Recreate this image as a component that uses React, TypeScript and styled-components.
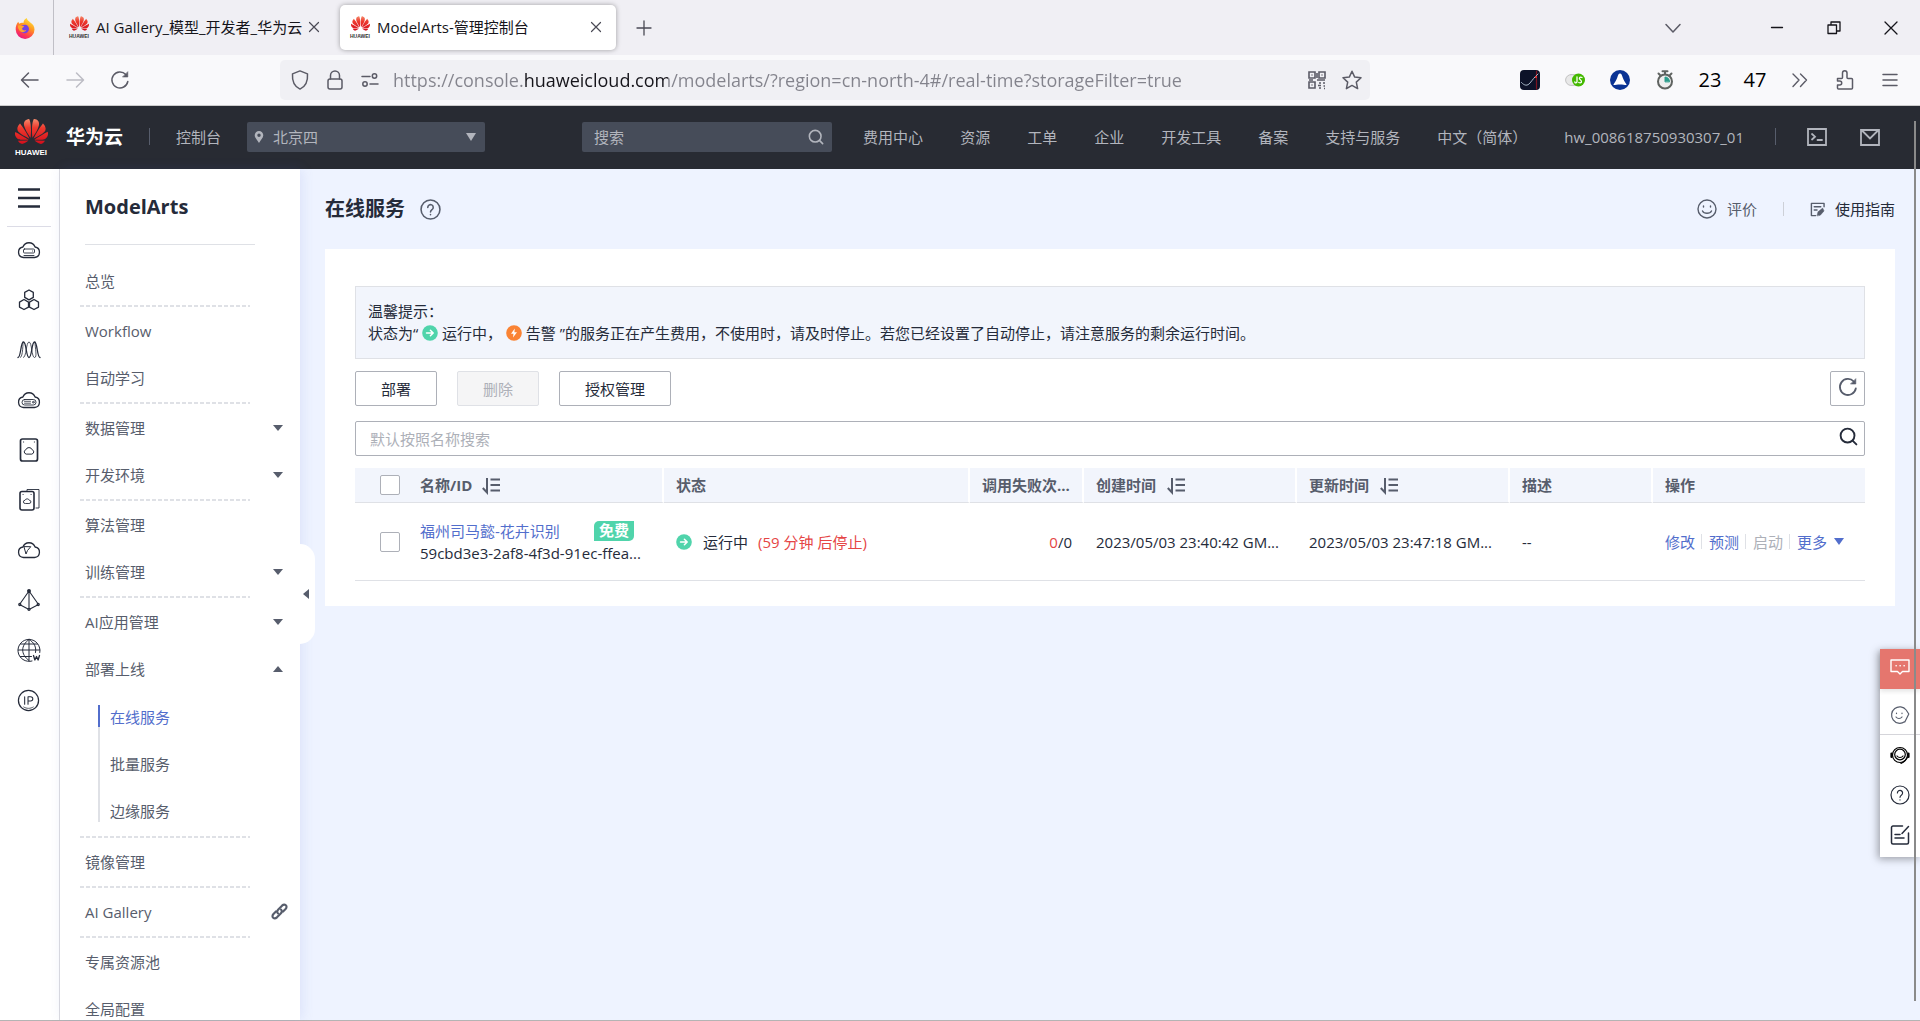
import React from "react";
import styled, { createGlobalStyle, css } from "styled-components";
import { SiHuawei } from "react-icons/si";

const C = {
  ink: "#252b3a",
  text: "#575d6c",
  muted: "#adb0b8",
  line: "#dfe1e6",
  link: "#526ecc",
  red: "#e54545",
  green: "#50d4ab",
  page: "#eef3ff",
  soft: "#f2f5fc",
  dark: "#282b33",
  field: "#464c59",
};

const Global = createGlobalStyle`
  *, *::before, *::after { box-sizing: border-box; }
  html, body, #root { height: 100%; }
  body {
    margin: 0;
    overflow: hidden;
    background: ${C.page};
    color: ${C.ink};
    font: 15px/22px "Open Sans", "Noto Sans CJK SC", sans-serif;
  }
  button, input, select { font: inherit; color: inherit; margin: 0; padding: 0; border: 0; background: none; border-radius: 0; }
  button { display: inline-flex; align-items: center; justify-content: center; white-space: nowrap; }
  a { color: inherit; text-decoration: none; white-space: nowrap; }
  svg { display: block; flex: none; }
  h1, h2, p, ul { margin: 0; padding: 0; }
  ul { list-style: none; }
`;

const Window = styled.div`
  display: flex;
  flex-direction: column;
  height: 100vh;
  border-bottom: 1px solid #b4b4b4;
`;

/* ---------- browser chrome ---------- */

const TabStrip = styled.header`
  display: flex;
  align-items: center;
  height: 55px;
  flex: none;
  background: #f0eff4;
  color: #15141a;
`;
const PinnedTab = styled.button`
  width: 54px;
  height: 55px;
  border-right: 1px solid #c0bfc6;
  padding-right: 4px;
`;
const Tab = styled.div<{ $active?: boolean; $width: number }>`
  display: flex;
  align-items: center;
  width: ${(p) => p.$width}px;
  height: 45px;
  padding: 0 13px 2px 10px;
  border-radius: 5px;
  white-space: nowrap;
  ${(p) => p.$active && css`background: #fff; box-shadow: 0 0 5px rgba(0, 0, 0, 0.35);`}
`;
const TabTitle = styled.span`
  flex: 1;
  padding-left: 7px;
`;
const TabArea = styled.div`
  display: flex;
  padding-left: 5px;
  gap: 6px;
`;
const PlainButton = styled.button<{ $size?: number }>`
  width: ${(p) => p.$size ?? 20}px;
  height: ${(p) => p.$size ?? 20}px;
  flex: none;
`;
const NewTab = styled(PlainButton)`
  margin-left: 18px;
`;
const WindowButtons = styled.div`
  display: flex;
  align-items: center;
  gap: 37px;
  margin-left: auto;
  padding-right: 19px;
`;
const TabList = styled(PlainButton)`
  margin-right: 47px;
`;

const Toolbar = styled.div`
  display: flex;
  align-items: center;
  height: 51px;
  flex: none;
  padding: 0 20px 0 20px;
  border-bottom: 1px solid #cccccc;
  background: #f9f9fb;
  color: #5b5b66;
`;
const ToolGroup = styled.div`
  display: flex;
  align-items: center;
  gap: 25px;
  font-size: 20px;
  color: #5b5b66;
`;
const UrlBar = styled.div`
  display: flex;
  align-items: center;
  flex: 1;
  height: 40px;
  margin: 0 150px 0 150px;
  padding: 0 8px 0 10px;
  gap: 15px;
  border-radius: 5px;
  background: #f0f0f4;
`;
const UrlInput = styled.input`
  flex: 1;
  min-width: 0;
  height: 32px;
  margin-left: -2px;
  outline: none;
  font-size: 18px;
  color: #15141a;
  background-image: linear-gradient(90deg, #83838c 131px, #15141a 131px, #15141a 275px, #83838c 275px);
  background-clip: text;
  -webkit-text-fill-color: transparent;
`;
const Counter = styled.span`
  width: 20px;
  display: flex;
  justify-content: center;
  color: #000;
`;

/* ---------- cloud header ---------- */

const CloudBar = styled.header`
  display: flex;
  align-items: center;
  height: 63px;
  flex: none;
  padding: 0 40px 2px 14px;
  background: ${C.dark};
  color: #b2b5bd;
`;
const LogoBox = styled.span<{ $small?: boolean }>`
  display: flex;
  flex-direction: column;
  align-items: center;
  width: ${(p) => (p.$small ? 20 : 34)}px;
  flex: none;
  color: ${(p) => (p.$small ? "#333" : "#fff")};
  font: bold ${(p) => (p.$small ? "5px/6px" : "8px/10px")} "Liberation Sans", sans-serif;
`;
const Brand = styled.strong`
  margin-left: 18px;
  font-size: 19px;
  color: #fff;
`;
const BarRule = styled.span<{ $gap: number }>`
  width: 1px;
  height: 17px;
  margin: 0 ${(p) => p.$gap}px;
  background: #575d6c;
`;
const RegionBox = styled.label`
  display: flex;
  align-items: center;
  position: relative;
  width: 238px;
  height: 30px;
  margin-left: 26px;
  padding: 0 9px 0 7px;
  gap: 9px;
  border-radius: 2px;
  background: ${C.field};
`;
const RegionSelect = styled.select`
  flex: 1;
  height: 30px;
  appearance: none;
  outline: none;
`;
const BarSearch = styled.label`
  display: flex;
  align-items: center;
  width: 250px;
  height: 30px;
  margin-left: 97px;
  padding: 0 8px 0 12px;
  border-radius: 2px;
  background: ${C.field};
`;
const BarInput = styled.input`
  flex: 1;
  min-width: 0;
  outline: none;
  &::placeholder { color: #b2b5bd; opacity: 1; }
`;
const BarLinks = styled.nav`
  display: flex;
  align-items: center;
  gap: 37px;
  margin-left: auto;
`;
const BarIcons = styled.div`
  display: flex;
  align-items: center;
  gap: 33px;
`;

/* ---------- page body ---------- */

const Body = styled.div`
  display: flex;
  flex: 1;
  min-height: 0;
`;
const Rail = styled.nav`
  display: flex;
  flex-direction: column;
  align-items: center;
  width: 60px;
  flex: none;
  padding: 16px 2px 0 0;
  background: #fff;
  border-right: 1px solid #dcdce0;
`;
const RailRule = styled.hr`
  width: 44px;
  height: 1px;
  margin: 16px 0 0;
  border: 0;
  background: #dcdce6;
`;
const RailLink = styled.a`
  display: flex;
  align-items: center;
  justify-content: center;
  width: 48px;
  height: 50px;
  padding-bottom: 4px;
  color: ${C.ink};
`;
const Side = styled.aside`
  position: relative;
  width: 240px;
  flex: none;
  background: #fff;
  box-shadow: 2px 0 12px rgba(82, 110, 204, 0.12);
`;
const SideTitle = styled.h2`
  height: 76px;
  margin: 0 45px 12px 25px;
  border-bottom: 1px solid #dfe1e6;
  font-size: 20px;
  line-height: 75px;
`;
const SideScroll = styled.div`
  height: 100%;
  overflow: hidden;
`;
const Group = styled.ul`
  padding-bottom: 3px;
  background: repeating-linear-gradient(90deg, ${C.line} 0 4px, transparent 4px 6px) 20px 100% / 170px 2px no-repeat;
`;
const sideRow = css`
  display: flex;
  align-items: center;
  justify-content: space-between;
  width: 100%;
  height: 47px;
  padding: 0 12px 0 25px;
  color: ${C.text};
`;
const SideLink = styled.a`${sideRow}`;
const SideButton = styled.button`${sideRow} padding-right: 17px;`;
const SubItem = styled.li`
  height: 47px;
  padding-left: 38px;
  &:last-child { height: 23px; }
`;
const SubLink = styled.a<{ $active?: boolean }>`
  display: flex;
  align-items: flex-start;
  height: 100%;
  padding-left: 10px;
  line-height: 24px;
  color: ${(p) => (p.$active ? C.link : C.text)};
  border-left: 2px solid ${C.line};
  ${(p) => p.$active && css`border-image: linear-gradient(${C.link} 22px, ${C.line} 22px) 1;`}
`;
const SubList = styled.ul`
  padding: 13px 0;
`;
const Collapse = styled.button`
  position: absolute;
  left: 100%;
  top: 375px;
  width: 15px;
  height: 100px;
  padding-right: 3px;
  border-radius: 0 15px 15px 0;
  background: #fff;
`;
const Main = styled.main`
  flex: 1;
  min-width: 0;
  padding: 0 25px;
`;
const PageHead = styled.div`
  display: flex;
  align-items: center;
  height: 80px;
  color: ${C.text};
`;
const Title = styled.h1`
  margin-right: 15px;
  font-size: 20px;
  line-height: 30px;
  color: ${C.ink};
`;
const HeadLinks = styled.div`
  display: flex;
  align-items: center;
  margin-left: auto;
`;
const HeadLink = styled.a<{ $strong?: boolean }>`
  display: flex;
  align-items: center;
  gap: 10px;
  color: ${(p) => (p.$strong ? C.ink : C.text)};
`;
const HeadRule = styled.span`
  width: 1px;
  height: 14px;
  margin: 0 26px;
  background: #cdd0d8;
`;
const Panel = styled.section`
  padding: 37px 30px 25px;
  background: #fff;
`;
const Notice = styled.div`
  padding: 13px 12px 14px;
  border: 1px solid ${C.line};
  background: ${C.soft};
`;
const NoticeLine = styled.p`
  display: flex;
  align-items: center;
  white-space: pre;
`;
const Actions = styled.div`
  display: flex;
  gap: 20px;
  margin: 12px 0 15px;
`;
const ActionButton = styled.button`
  height: 35px;
  padding: 0 25px;
  border: 1px solid ${C.muted};
  border-radius: 2px;
  background: #fff;
  &:disabled { background: #f5f5f6; border-color: ${C.line}; color: ${C.muted}; }
`;
const RefreshButton = styled(ActionButton)`
  width: 35px;
  padding: 0 0 3px;
  margin-left: auto;
  color: ${C.text};
`;
const SearchBox = styled.label`
  display: flex;
  align-items: center;
  height: 35px;
  padding: 0 6px 0 14px;
  border: 1px solid ${C.muted};
  border-radius: 2px;
  svg { margin-bottom: 4px; }
`;
const SearchInput = styled.input`
  flex: 1;
  outline: none;
  &::placeholder { color: ${C.muted}; opacity: 1; }
`;
const Table = styled.table`
  width: 100%;
  margin-top: 12px;
  border-collapse: separate;
  border-spacing: 0;
  table-layout: fixed;
`;
const Col = styled.col<{ $w?: string }>`
  width: ${(p) => p.$w ?? "auto"};
`;
const Th = styled.th`
  height: 35px;
  padding: 0 0 0 12px;
  border-bottom: 1px solid ${C.line};
  border-right: 2px solid #fff;
  background: ${C.soft};
  color: ${C.text};
  text-align: left;
  white-space: nowrap;
  overflow: hidden;
  &:first-child { padding-left: 25px; }
  &:last-child { border-right: 0; }
`;
const Td = styled.td<{ $right?: boolean }>`
  height: 78px;
  padding: 0 12px;
  border-bottom: 1px solid ${C.line};
  text-align: ${(p) => (p.$right ? "right" : "left")};
  white-space: nowrap;
  &:first-child { padding-left: 25px; }
`;
const Flex = styled.div<{ $gap: number }>`
  display: flex;
  align-items: center;
  gap: ${(p) => p.$gap}px;
`;
const Check = styled.input`
  appearance: none;
  width: 20px;
  height: 20px;
  flex: none;
  border: 1px solid ${C.muted};
  border-radius: 2px;
  background: #fff;
`;
const NameLine = styled.div`
  display: flex;
  align-items: center;
  justify-content: space-between;
  width: 214px;
`;
const Blue = styled.a`color: ${C.link};`;
const Red = styled.span`color: ${C.red};`;
const Free = styled.span`
  height: 20px;
  padding: 0 5px;
  border-radius: 5px 0 5px 0;
  background: ${C.green};
  color: #fff;
  font-weight: bold;
  line-height: 18px;
`;
const Ops = styled.div`
  display: flex;
  align-items: center;
  & > * + * { margin-left: 6px; padding-left: 7px; }
`;
const Op = styled.button`
  gap: 7px;
  height: 15px;
  color: ${C.link};
  & + & { border-left: 1px solid ${C.line}; }
  &:disabled { color: ${C.muted}; }
`;

/* ---------- floating helpers ---------- */

const Float = styled.div`
  position: fixed;
  right: 0;
  top: 649px;
  width: 40px;
  padding-bottom: 2px;
  background: #fff;
  box-shadow: -2px 2px 8px rgba(0, 0, 0, 0.35);
`;
const FloatButton = styled.button<{ $hot?: boolean; $rule?: boolean }>`
  width: 40px;
  height: 40px;
  color: ${(p) => (p.$hot ? "#fff" : C.ink)};
  background: ${(p) => (p.$hot ? "#e5766e" : "#fff")};
  ${(p) => p.$hot && css`margin-bottom: 6px; padding-bottom: 4px; box-shadow: 0 2px 5px rgba(0, 0, 0, 0.12);`}
  ${(p) => p.$rule && css`border-bottom: 1px solid #d5d5da;`}
`;
const ScrollThumb = styled.div`
  position: fixed;
  right: 4px;
  top: 121px;
  bottom: 20px;
  width: 2px;
  background: #8a8a8a;
`;

/* ---------- drawings ---------- */

type IconProps = { size?: number; w?: number; children: React.ReactNode; box?: number; color?: string };
const Icon = ({ size = 20, w = 1.4, box = 20, color = "currentColor", children }: IconProps) => (
  <svg width={size} height={size} viewBox={`0 0 ${box} ${box}`} fill="none" stroke={color} strokeWidth={w} strokeLinecap="round" strokeLinejoin="round" aria-hidden="true">
    {children}
  </svg>
);

const Huawei = ({ small }: { small?: boolean }) => (
  <LogoBox $small={small}>
    <svg width="0" height="0" style={{ position: "absolute" }} aria-hidden="true">
      <linearGradient id="petal" x1="0" y1="0" x2="0" y2="1">
        <stop offset="0" stopColor="#f58a6c" />
        <stop offset="0.35" stopColor="#ee3a2e" />
        <stop offset="1" stopColor="#d40e1c" />
      </linearGradient>
    </svg>
    <SiHuawei size={small ? 19 : 33} fill="url(#petal)" viewBox="0 2 24 20" height={small ? 16 : 27} />
    HUAWEI
  </LogoBox>
);

const Firefox = () => (
  <svg width="22" height="22" viewBox="0 0 22 22" aria-hidden="true">
    <defs>
      <linearGradient id="fox" x1="0.8" y1="0" x2="0.3" y2="1">
        <stop offset="0" stopColor="#fff044" />
        <stop offset="0.4" stopColor="#ff9a1f" />
        <stop offset="0.75" stopColor="#ff3d4f" />
        <stop offset="1" stopColor="#e31587" />
      </linearGradient>
    </defs>
    <path d="M12.6 1c.4 2 2.2 3 3.4 4.2C18.800 7 20.500 9.300 20.500 12.400A9.400 9.400 0 0 1 1.700 12.600C1.500 9.500 2.600 6.500 4.300 4.800c.2.900.5 1.400 1 1.900C7 5.500 8.500 5.800 9.400 6c.2-2.200 1.300-4 3.200-5z" fill="url(#fox)" />
    <path d="M7.200 9.500c1-1.700 4.600-2.600 6.500-.6 2.100 2.100 1.500 5.900-1.500 7-2.900 1-5.800-.7-5.800-3.500 0-1.200.3-2.100.8-2.900z" fill="#7542e5" />
    <path d="M4 8.700c1.300-.6 2.700-.5 3.500.2l2.600.2c-.2 1.300-1.300 1.400-2 2.100-.2 1.800 1.800 2.700 4.100 1.900-.8 2.300-3.900 2.700-5.700 1.400C4.600 13 3.700 10.800 4 8.700z" fill="#ffa42a" />
  </svg>
);

const Close = () => (
  <Icon size={14} box={14} w={1.2} color="#4a4a55"><path d="M2.500 2.500l9 9M11.500 2.500l-9 9" /></Icon>
);
const Reload = ({ size = 20, w = 1.6 }: { size?: number; w?: number }) => (
  <Icon size={size} w={w}>
    <path d="M17.800 11.500A8 8 0 1 1 15.800 4.500" />
    <path d="M17.800 2v5h-5z" fill="currentColor" strokeWidth="0.6" />
  </Icon>
);
const Magnifier = ({ size = 18, w = 1.8 }: { size?: number; w?: number }) => (
  <Icon size={size} w={w}><circle cx="9" cy="9" r="7.300" /><path d="M14.300 14.300l4 4" /></Icon>
);
const Triangle = ({ dir = "down", color = C.text, w = 10, h = 6 }: { dir?: "down" | "up" | "left"; color?: string; w?: number; h?: number }) => {
  const d = { down: "M0 0h10L5 6z", up: "M0 6h10L5 0z", left: "M10 0v6L0 3z" }[dir];
  return <svg width={w} height={h} viewBox="0 0 10 6" preserveAspectRatio="none" aria-hidden="true"><path d={d} fill={color} /></svg>;
};
const Sort = () => (
  <Icon size={20} w={2}>
    <path d="M6 3v14.500l-4.200-4.500" strokeLinecap="butt" strokeLinejoin="miter" />
    <path d="M9.500 4.500H19M9.500 10H19M9.500 15.500H19" strokeLinecap="butt" />
  </Icon>
);
const Running = () => (
  <Icon size={16} box={16} w={1.5} color="#fff">
    <circle cx="8" cy="8" r="7.800" fill={C.green} stroke="none" />
    <path d="M4.500 8h6.600M8.400 5.200L11.200 8l-2.800 2.800" />
  </Icon>
);
const Alarm = () => (
  <Icon size={16} box={16} color="#fff">
    <circle cx="8" cy="8" r="7.800" fill="#fa8334" stroke="none" />
    <path d="M8.800 3.500L5 8.800h2.500L7 12.500l4-5.300H8.400z" fill="#fff" stroke="none" />
  </Icon>
);
const Question = ({ size = 20, w = 1.5 }: { size?: number; w?: number }) => (
  <Icon size={size} w={w}>
    <circle cx="10" cy="10" r="9" />
    <path d="M7.400 8a2.600 2.600 0 1 1 4.200 2c-1 .8-1.600 1.200-1.600 2.300M10 14.800v.2" />
  </Icon>
);

const cloud = "M6.500 19.500a5.300 5.300 0 0 1-.6-10.500 6.500 6.500 0 0 1 12.200 0 5.300 5.300 0 0 1-.6 10.500z";
const railIcons: [string, React.ReactNode][] = [
  ["弹性云服务器", <><path d={cloud} /><rect x="6.500" y="11" width="11" height="4" rx="1" strokeWidth="0.9" /><path d="M7 17.500h10M15.500 13h.2" strokeWidth="0.9" /></>],
  ["容器", <><path d="M12 2l4.300 2.400v5L12 11.900 7.700 9.400v-5zM7 11.500l4.500 2.600v5L7 21.500l-4.500-2.400v-5zM17 11.500l4.500 2.600v5L17 21.500l-4.500-2.400v-5z" /></>],
  ["弹性伸缩", <><path d="M1 19.500C4 19.500 3.500 4 6.500 4S9 19.500 12 19.500 14.500 4 17.500 4 20 19.500 23 19.500" /><path d="M3.500 19.500C6 19.500 6 4 6 4M6.500 19.500C9.500 19.500 9 4 12 4s2.500 15.500 5.500 15.500S18 10 18 4" strokeWidth="0.8" /></>],
  ["裸金属服务器", <><path d={cloud} /><rect x="5" y="11.500" width="14" height="5.500" rx="2.700" strokeWidth="0.9" /><path d="M7.500 13.300h6M7.500 15.200h6" strokeWidth="0.8" /><circle cx="16.300" cy="14.200" r="0.900" strokeWidth="0.8" /></>],
  ["云硬盘", <><rect x="3.500" y="1" width="17" height="22" rx="2" strokeWidth="1.700" /><path d="M8.800 16a2.200 2.200 0 0 1 0-4.200 3.400 3.400 0 0 1 6.400 0 2.200 2.200 0 0 1 0 4.200zM6.500 4h.2M17.300 4h.2" strokeWidth="1" /></>],
  ["云备份", <><rect x="3" y="3.500" width="14" height="18.500" rx="2" strokeWidth="1.600" /><path d="M8 15.500a1.600 1.600 0 0 1 0-3.200 2.300 2.300 0 0 1 4.300 0 1.600 1.600 0 0 1 0 3.200zM6 6.500h.2M14 6.500h.2M10 3V1.500h12v18.500h-3" strokeWidth="0.900" /></>],
  ["云监控", <><path d={cloud} /><path d="M7 9l2 7 1.500-3.500L13.500 9z" strokeWidth="1" /></>],
  ["网络", <><path d="M12 3L2.500 16.500 12 21.500l9.500-5zM12 3v18.500" strokeWidth="1.100" /><circle cx="12" cy="3" r="1.300" fill="currentColor" /><circle cx="2.800" cy="16.500" r="1" fill="#fff" /><circle cx="21.200" cy="16.500" r="1" fill="#fff" /><circle cx="12" cy="21.300" r="1" fill="#fff" /></>],
  ["域名", <><path d="M15 23A11 11 0 1 1 22.800 14.500M12 1.500v21M1.200 12h21.600M3.500 6h17M3.500 18.500h11M12 1.500c-8.500 6-8.500 15 0 21M12 1.500c5.500 3 7.500 8 6.500 13" strokeWidth="1" /><path d="M16.500 17.500l1.400 4.500 1.600-3.500 1.600 3.500 1.400-4.500" /></>],
];

type NavItem = { label: string; arrow?: "down" | "up"; ext?: boolean; sub?: string[] };
const groups: NavItem[][] = [
  [{ label: "总览" }],
  [{ label: "Workflow" }, { label: "自动学习" }],
  [{ label: "数据管理", arrow: "down" }, { label: "开发环境", arrow: "down" }],
  [{ label: "算法管理" }, { label: "训练管理", arrow: "down" }],
  [{ label: "AI应用管理", arrow: "down" }, { label: "部署上线", arrow: "up", sub: ["在线服务", "批量服务", "边缘服务"] }],
  [{ label: "镜像管理" }],
  [{ label: "AI Gallery", ext: true }],
  [{ label: "专属资源池" }, { label: "全局配置" }],
];

const LinkIcon = () => (
  <Icon size={17} box={18} w={2.3}>
    <path d="M7.300 11c-1.200-1.500-.8-3 .4-4.200l4-4c1.400-1.300 3-1.300 4-.4s1 2.600-.3 4l-2.600 2.600" />
    <path d="M10.700 7c1.200 1.500.8 3-.4 4.200l-4 4c-1.400 1.300-3 1.300-4 .4s-1-2.600.3-4L5.200 9" />
  </Icon>
);

const SideNav = () => (
  <Side>
    <SideScroll>
      <SideTitle>ModelArts</SideTitle>
      {groups.map((items, i) => (
        <Group key={i}>
          {items.map((it) => (
            <li key={it.label}>
              {it.arrow ? (
                <SideButton type="button" aria-expanded={it.arrow === "up"}>{it.label}<Triangle dir={it.arrow} /></SideButton>
              ) : (
                <SideLink href="#">{it.label}{it.ext && <LinkIcon />}</SideLink>
              )}
              {it.sub && (
                <SubList>
                  {it.sub.map((s, k) => (
                    <SubItem key={s}><SubLink href="#" $active={k === 0}>{s}</SubLink></SubItem>
                  ))}
                </SubList>
              )}
            </li>
          ))}
        </Group>
      ))}
    </SideScroll>
    <Collapse type="button" aria-label="收起"><Triangle dir="left" w={6} h={10} /></Collapse>
  </Side>
);

const Browser = () => (
  <>
    <TabStrip>
      <PinnedTab type="button" aria-label="Firefox"><Firefox /></PinnedTab>
      <TabArea>
        <Tab $width={275}>
          <Huawei small />
          <TabTitle>AI Gallery_模型_开发者_华为云</TabTitle>
          <PlainButton type="button" $size={14} aria-label="关闭标签页"><Close /></PlainButton>
        </Tab>
        <Tab $width={276} $active>
          <Huawei small />
          <TabTitle>ModelArts-管理控制台</TabTitle>
          <PlainButton type="button" $size={14} aria-label="关闭标签页"><Close /></PlainButton>
        </Tab>
      </TabArea>
      <NewTab type="button" aria-label="新建标签页"><Icon w={1.3} color="#4a4a55"><path d="M10 3v14M3 10h14" /></Icon></NewTab>
      <WindowButtons>
        <TabList type="button" aria-label="所有标签页"><Icon w={1.5} color="#5b5b66"><path d="M3 6.500l7 7.500 7-7.500" /></Icon></TabList>
        <PlainButton type="button" aria-label="最小化"><Icon w={1.3}><path d="M4.500 9.500h11" /></Icon></PlainButton>
        <PlainButton type="button" aria-label="还原"><Icon w={1.3}><path d="M4 7h8.500v8.500H4zM7 7V4h9v9h-3" /></Icon></PlainButton>
        <PlainButton type="button" aria-label="关闭"><Icon w={1.3}><path d="M4 4l12 12M16 4L4 16" /></Icon></PlainButton>
      </WindowButtons>
    </TabStrip>
    <Toolbar>
      <ToolGroup>
        <PlainButton type="button" aria-label="后退"><Icon w={1.5}><path d="M18 10H2M8.500 3L1.500 10l7 7" /></Icon></PlainButton>
        <PlainButton type="button" aria-label="前进"><Icon w={1.5} color="#bcbcc4"><path d="M2 10h16M11.500 3l7 7-7 7" /></Icon></PlainButton>
        <PlainButton type="button" aria-label="刷新页面"><Reload w={1.5} /></PlainButton>
      </ToolGroup>
      <UrlBar>
        <Icon w={1.5}><path d="M10 .9l7.500 3c.5 7-1.500 12.500-7.500 15.200C4 16.400 2 10.900 2.500 3.900z" /></Icon>
        <Icon w={1.5}><rect x="3" y="9" width="14" height="10" rx="2" /><path d="M5.500 9V5.500a4.500 4.500 0 0 1 9 0V9" /></Icon>
        <Icon w={1.5}><path d="M2 6.500h8M10 14h8" /><circle cx="14.500" cy="6" r="2.200" /><circle cx="5" cy="14" r="2.200" /></Icon>
        <UrlInput type="text" aria-label="网址" defaultValue="https://console.huaweicloud.com/modelarts/?region=cn-north-4#/real-time?storageFilter=true" />
        <PlainButton type="button" aria-label="二维码">
          <Icon w={1.6}>
            <path d="M2 2h6v6H2zM12 2h6v6h-6zM2 12h6v6H2z" strokeLinejoin="miter" />
            <path d="M4.500 5h1M14.500 5h1M4.500 15h1M10 3v5M10 10h8M2 10h4M12 13h2M16 13h2M11 15.500h3M16.500 16h1.500M12 18h2M17 18.500h1" strokeLinecap="butt" />
          </Icon>
        </PlainButton>
        <PlainButton type="button" aria-label="收藏"><Icon w={1.5}><path d="M10 1.200l2.700 5.900 6.300.7-4.700 4.300 1.300 6.500L10 15.400l-5.600 3.200 1.300-6.500L1 7.800l6.300-.7z" /></Icon></PlainButton>
      </UrlBar>
      <ToolGroup>
        <PlainButton type="button" aria-label="扩展一">
          <Icon><rect width="20" height="20" rx="4" fill="#0c1228" stroke="none" /><path d="M16.500 1v18" stroke="#7c1420" strokeWidth="1.200" /><path d="M1.500 12.500c3 3.500 6 3.500 8.500.5s4.500-6 8-9" stroke="#a9b8c8" strokeWidth="1" /><circle cx="16" cy="7" r="1" fill="#f33" stroke="none" /></Icon>
        </PlainButton>
        <PlainButton type="button" aria-label="JavaScript 开关">
          <Icon><rect x=".6" y="4.600" width="17" height="10.800" rx="5.400" fill="#e8e8e8" stroke="#bdbdbd" strokeWidth="0.900" /><circle cx="13.500" cy="10" r="6.500" fill="#44b900" stroke="none" /><path d="M12 7v4.500c0 1.800-2.200 1.800-2.200.3M17 7.500c-2.500-1-3.500 1-1.700 2.200s1.700 4-1.500 2.800" stroke="#fff" strokeWidth="1.300" /></Icon>
        </PlainButton>
        <PlainButton type="button" aria-label="扩展二">
          <Icon><circle cx="10" cy="10" r="10" fill="#0a3394" stroke="none" /><path d="M10 3.500c1.500 0 1.800 1.500 2.700 4s2 4.500 4 7.200c-2 .8-3.500-.2-4.800-.3H8.100c-1.300.1-2.800 1.100-4.800.3 2-2.700 3.100-4.700 4-7.200s1.200-4 2.700-4z" fill="#fff" stroke="none" /></Icon>
        </PlainButton>
        <PlainButton type="button" aria-label="计时器">
          <Icon color="#5f6360" w={2}><circle cx="10" cy="11.500" r="7" fill="#eee" /><path d="M10 11.500V7a4.500 4.500 0 0 1 4.500 4.500z" fill="#2b9c8a" stroke="#2b9c8a" strokeWidth="1" /><path d="M7.500 1.200h5M10 1.500v2.500M3.500 3.500L5 5M16.500 3.500L15 5" /></Icon>
        </PlainButton>
        <Counter>23</Counter>
        <Counter>47</Counter>
        <PlainButton type="button" aria-label="更多工具"><Icon w={1.4}><path d="M3 4l6 6-6 6.500M10.500 4l6 6-6 6.500" /></Icon></PlainButton>
        <PlainButton type="button" aria-label="扩展"><Icon w={1.500}><path d="M2.500 8.500h4a1 1 0 0 0 1-1V3a2.200 2.200 0 0 1 4.500 0v4.500a1 1 0 0 0 1 1h3.500a1 1 0 0 1 1 1V18a1 1 0 0 1-1 1h-13a1 1 0 0 1-1-1v-3h2.200a2 2 0 0 0 0-4H2.500z" /></Icon></PlainButton>
        <PlainButton type="button" aria-label="菜单"><Icon w={1.500}><path d="M3 4.500h14M3 10h14M3 15.500h14" /></Icon></PlainButton>
      </ToolGroup>
    </Toolbar>
  </>
);

const CloudHeader = () => (
  <CloudBar>
    <Huawei />
    <Brand>华为云</Brand>
    <BarRule $gap={26} />
    <a href="#">控制台</a>
    <RegionBox>
      <svg width="10" height="12" viewBox="0 0 10 14" aria-hidden="true"><path fillRule="evenodd" d="M5 0a5 5 0 0 1 5 5c0 3.300-3.300 5.500-5 9-1.700-3.500-5-5.700-5-9a5 5 0 0 1 5-5zm0 3a2 2 0 1 0 0 4 2 2 0 0 0 0-4z" fill="#b2b5bd" /></svg>
      <RegionSelect aria-label="区域"><option>北京四</option></RegionSelect>
      <Triangle color="#b2b5bd" w={10} h={8} />
    </RegionBox>
    <BarSearch>
      <BarInput type="text" placeholder="搜索" aria-label="搜索" />
      <Magnifier size={16} w={2} />
    </BarSearch>
    <BarLinks>
      {["费用中心", "资源", "工单", "企业", "开发工具", "备案", "支持与服务", "中文（简体）", "hw_008618750930307_01"].map((t) => (
        <a href="#" key={t}>{t}</a>
      ))}
    </BarLinks>
    <BarRule $gap={31} />
    <BarIcons>
      <PlainButton type="button" aria-label="命令行"><Icon w={1.800}><path d="M1 2h18v16H1zM5 7l3 2.700L5 12.500M10.500 13h4.500" strokeLinejoin="miter" /></Icon></PlainButton>
      <PlainButton type="button" aria-label="消息"><Icon w={1.800}><path d="M1 3h18v15H1zM2.500 4l7.500 7.500L17.500 4" strokeLinejoin="miter" /></Icon></PlainButton>
    </BarIcons>
  </CloudBar>
);

const RailNav = () => (
  <Rail>
    <PlainButton type="button" aria-label="服务列表" $size={25}><Icon size={24} box={24} w={2.400}><path d="M1 3.500h22M1 12h22M1 20.500h22" strokeLinecap="butt" /></Icon></PlainButton>
    <RailRule />
    {railIcons.map(([label, art]) => (
      <RailLink href="#" key={label} aria-label={label}><Icon size={24} box={24} w={1.300}>{art}</Icon></RailLink>
    ))}
    <RailLink href="#" aria-label="弹性公网IP">
      <Icon size={23} box={24} w={1.300}><circle cx="12" cy="12" r="10.500" /><path d="M8 8v8M11.500 16V8h2.700a2.300 2.300 0 0 1 0 4.600h-2.700" strokeWidth="1.100" /><path d="M7 18.800c3 1.900 7 1.900 10 0" strokeWidth="0.800" /></Icon>
    </RailLink>
  </Rail>
);

const ServiceTable = () => (
  <Table>
    <colgroup>
      <Col $w="309px" /><Col $w="306px" /><Col $w="114px" /><Col $w="213px" /><Col $w="213px" /><Col $w="143px" /><Col />
    </colgroup>
    <thead>
      <tr>
        <Th scope="col"><Flex $gap={20}><Check type="checkbox" aria-label="全选" /><Flex $gap={9}>名称/ID<Sort /></Flex></Flex></Th>
        <Th scope="col">状态</Th>
        <Th scope="col">调用失败次...</Th>
        <Th scope="col"><Flex $gap={10}>创建时间<Sort /></Flex></Th>
        <Th scope="col"><Flex $gap={10}>更新时间<Sort /></Flex></Th>
        <Th scope="col">描述</Th>
        <Th scope="col">操作</Th>
      </tr>
    </thead>
    <tbody>
      <tr>
        <Td>
          <Flex $gap={20}>
            <Check type="checkbox" aria-label="选择 福州司马懿-花卉识别" />
            <div>
              <NameLine><Blue href="#">福州司马懿-花卉识别</Blue><Free>免费</Free></NameLine>
              59cbd3e3-2af8-4f3d-91ec-ffea...
            </div>
          </Flex>
        </Td>
        <Td><Flex $gap={11}><Running /><Flex $gap={10}>运行中<Red>(59 分钟 后停止)</Red></Flex></Flex></Td>
        <Td $right><Red>0</Red>/0</Td>
        <Td>2023/05/03 23:40:42 GM...</Td>
        <Td>2023/05/03 23:47:18 GM...</Td>
        <Td>--</Td>
        <Td>
          <Ops>
            <Op type="button">修改</Op>
            <Op type="button">预测</Op>
            <Op type="button" disabled>启动</Op>
            <Op type="button">更多<Triangle color={C.link} w={10} h={7} /></Op>
          </Ops>
        </Td>
      </tr>
    </tbody>
  </Table>
);

export default function App() {
  return (
    <Window>
      <Global />
      <Browser />
      <CloudHeader />
      <Body>
        <RailNav />
        <SideNav />
        <Main>
          <PageHead>
            <Title>在线服务</Title>
            <Question size={21} />
            <HeadLinks>
              <HeadLink href="#"><Icon size={20}><circle cx="10" cy="10" r="9" /><path d="M6.500 7v1M13.500 7v1M5.500 12c1.500 3 7.500 3 9 0" /></Icon>评价</HeadLink>
              <HeadRule />
              <HeadLink href="#" $strong>
                <Icon size={15} box={16} w={1.500} color={C.text}><path d="M15 5V1.500H1.500v13H6M4.500 5h7M4.500 8.500h3" /><path d="M7.500 14.500l1-4 5-4 1.500 3-4 4.500z" fill={C.text} strokeWidth="0.500" /></Icon>
                使用指南
              </HeadLink>
            </HeadLinks>
          </PageHead>
          <Panel>
            <Notice>
              <NoticeLine>温馨提示：</NoticeLine>
              <NoticeLine>状态为“ <Running /> 运行中， <Alarm /> 告警 ”的服务正在产生费用，不使用时，请及时停止。若您已经设置了自动停止，请注意服务的剩余运行时间。</NoticeLine>
            </Notice>
            <Actions>
              <ActionButton type="button">部署</ActionButton>
              <ActionButton type="button" disabled>删除</ActionButton>
              <ActionButton type="button">授权管理</ActionButton>
              <RefreshButton type="button" aria-label="刷新"><Reload w={1.800} /></RefreshButton>
            </Actions>
            <SearchBox>
              <SearchInput type="text" placeholder="默认按照名称搜索" aria-label="默认按照名称搜索" />
              <Magnifier size={19} w={2} />
            </SearchBox>
            <ServiceTable />
          </Panel>
        </Main>
      </Body>
      <Float>
        <FloatButton type="button" $hot aria-label="意见反馈"><Icon w={1.400}><path d="M1 3h18v11.500h-6.500L10 17l-2.500-2.500H1zM6 8.700h.3M10 8.700h.3M14 8.700h.3" /></Icon></FloatButton>
        <FloatButton type="button" $rule aria-label="满意度"><Icon w={1.200} color={C.text}><path d="M14.500 16.800A8.200 8.200 0 1 1 16.200 5M16.500 5.500l2.300 3.500-4 8M6.500 8v.6M12 8v.6M6 12c1.500 2 4.500 2 6 0" /></Icon></FloatButton>
        <FloatButton type="button" aria-label="在线客服"><Icon w={1.200} color="#000"><circle cx="10" cy="10" r="7.500" /><circle cx="10" cy="9.500" r="5.300" /><path d="M7 11c1.500 2 4.500 2 6 0M17.500 12c-1.500 3.500-3 5-6.500 6.500" /><path d="M1.500 8.500v3.500M18.500 8.500v3.500" strokeWidth="2.200" /></Icon></FloatButton>
        <FloatButton type="button" aria-label="帮助"><Question w={1.200} /></FloatButton>
        <FloatButton type="button" aria-label="建议"><Icon w={1.500}><path d="M12.500 1H3a1.500 1.500 0 0 0-1.500 1.500v15A1.500 1.500 0 0 0 3 19h14a1.500 1.500 0 0 0 1.500-1.500V8M18.500 1.500L12 8.500M5 9.500h5M5 13h9" /></Icon></FloatButton>
      </Float>
      <ScrollThumb />
    </Window>
  );
}
